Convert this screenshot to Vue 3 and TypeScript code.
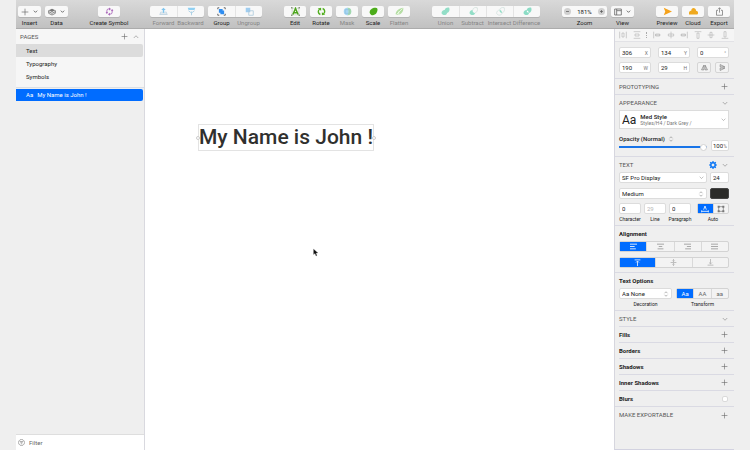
<script setup lang="ts">
import { h, ref } from 'vue'

type Shape = { d: string; fill?: string; stroke?: string; w?: number; o?: number }

const line = (d: string, stroke = '#777', w = 0.8): Shape => ({ d, stroke, w })
const solid = (d: string, fill: string, o = 1): Shape => ({ d, fill, o })

const icons: Record<string, Shape[]> = {
  plus: [line('M6 1V11M1 6H11', '#666', 1)],
  minus: [solid('M0 6a6 6 0 1 0 12 0a6 6 0 1 0-12 0', '#d0d0d0'), line('M3.5 6H8.5', '#555', 1.2)],
  zoomIn: [solid('M0 6a6 6 0 1 0 12 0a6 6 0 1 0-12 0', '#d0d0d0'), line('M3.5 6H8.5M6 3.5V8.5', '#555', 1.2)],
  down: [line('M2 4L6 8L10 4', '#444', 1.8)],
  thinDown: [line('M1.5 4L6 8.5L10.5 4', '#777', 1.1)],
  thinUp: [line('M1.5 8L6 3.5L10.5 8', '#777', 1.1)],
  stepper: [line('M3 4.5L6 1.5L9 4.5M3 7.5L6 10.5L9 7.5', '#777', 1.1)],
  data: [
    solid('M6 1L11 3.5L6 6L1 3.5Z', '#777'),
    line('M1 5.5L6 8L11 5.5M1 8L6 10.5L11 8M1 3.5V8M11 3.5V8', '#777', 1.3),
  ],
  symbol: [
    line('M2.5 8V5a2.5 2.5 0 0 1 2.5-2.5H6M9.5 4V7a2.5 2.5 0 0 1-2.5 2.5H6', '#a45bb5', 1.1),
    solid('M5.5 .5L8 2.5L5.5 4.5ZM6.5 7.5L4 9.5L6.5 11.5ZM.8 7H4.2L2.5 9.2ZM7.8 5H11.2L9.5 2.8Z', '#a45bb5'),
  ],
  forward: [solid('M6 1L9 4H7V8H5V4H3Z', '#7ec4ee'), line('M3 6L1 10H11L9 6M2 8H10', '#b5cddd', 1)],
  backward: [solid('M1 1H11L10 4H2Z', '#8fd0f3'), line('M2 5L6 8L10 5M6 6V11', '#a9cfe4', 1.2)],
  group: [
    solid('M2.5 2.5H7.5V4.5H9.5V9.5H4.5V7.5H2.5Z', '#2e8cf0'),
    line('M1 3V1H3M9 1H11V3M11 9V11H9M3 11H1V9', '#555', 1.1),
  ],
  ungroup: [solid('M1 1H7V7H1Z', '#9fcdf0'), line('M5 5H11V11H5Z', '#a6c5da', 1)],
  edit: [
    line('M1.5 1.5H10.5V10.5H1.5Z', '#a2b596', 0.6),
    line('M2.5 10L6 2L9.5 10M4 7.5H8', '#4ca51b', 2),
    solid('M0 0H2V2H0ZM10 0H12V2H10ZM0 10H2V12H0ZM10 10H12V12H10Z', '#899680'),
  ],
  rotate: [
    line('M4.5 10C1 8.5 1 4.5 3.5 3M7.5 2C11 3.5 11 7.5 8.5 9', '#51ae1e', 1.9),
    solid('M1 2L5.5 1V5ZM11 10L6.5 11V7Z', '#51ae1e'),
  ],
  mask: [
    solid('M1 6a5 5 0 1 0 10 0a5 5 0 1 0-10 0', '#a7d5f4'),
    solid('M6 1a5 5 0 0 1 0 10C8 8 8 4 6 1', '#a8dda6'),
    line('M3 3.5H9V8.5H3Z', '#89bed9', 0.8),
  ],
  scale: [solid('M1 8C0 4 5 0 9 1C12 1 12 5 10 8C8 11 3 13 1 8', '#4cac1a')],
  flatten: [solid('M1 10C0 6 6 1 11 1C12 6 7 12 1 10', '#b5dda4'), line('M2 10L10 2M5 10V6', '#f5fff0', 1)],
  union: [solid('M1 9C0 6 3 4 5 4C5 1 9 0 11 1C12 4 11 7 8 8C8 11 3 12 1 9', '#93dec7')],
  subtract: [solid('M1 9C0 6 3 4 5 4C4 6 6 8 8 8C8 11 3 12 1 9', '#93dec7'), line('M5 4C5 1 9 0 11 1C12 4 11 7 8 8', '#c7dad4', 0.8)],
  intersect: [
    line('M1 9C0 6 3 4 5 4C5 1 9 0 11 1C12 4 11 7 8 8C8 11 3 12 1 9', '#cadbd6', 0.8),
    solid('M5 4C7 4 8 6 8 8C6 8 4 6 5 4', '#93dec7'),
  ],
  difference: [
    solid('M1 9C0 6 3 4 5 4C5 1 9 0 11 1C12 4 11 7 8 8C8 11 3 12 1 9', '#8bdcc5'),
    solid('M5 4.5C7 4.5 7.5 6 7.5 7.5C6 7.5 4.5 6 5 4.5', '#fff'),
  ],
  view: [line('M1 1.5H11V10.5H1ZM4 1.5V10.5M4 4H11', '#666', 1.2)],
  preview: [solid('M1 1L12 6L1 11L3 6Z', '#f5a21b')],
  cloud: [solid('M0 10C-1 6 2 5 3 5C3 0 9 0 9.5 5C12 5 13 9 11 10Z', '#efa91f')],
  share: [line('M4 4.5H2V11H10V4.5H8M6 7.5V1M4 3L6 1L8 3', '#777', 1)],
  distH: [line('M1 1V11M11 1V11M4.5 3H7.5V9H4.5Z', '#aaa')],
  distV: [line('M1 1H11M1 11H11M3 4.5H9V7.5H3Z', '#aaa')],
  alignL: [line('M1 1V11M3 6H11M4 4.5H10V7.5H4Z', '#aaa')],
  alignC: [line('M6 1V11M2 4.5H10V7.5H2Z', '#aaa')],
  alignR: [line('M11 1V11M1 6H9M2 4.5H8V7.5H2Z', '#aaa')],
  alignT: [line('M1 1H11M4.5 3H7.5V11H4.5Z', '#aaa')],
  alignM: [line('M1 6H11M4.5 2H7.5V10H4.5Z', '#aaa')],
  alignB: [line('M1 11H11M4.5 1H7.5V9H4.5Z', '#aaa')],
  flipH: [line('M5 2V10H1ZM7 2V10H11Z', '#666', 1)],
  flipV: [line('M2 1V5L10 5ZM2 7H10L2 11Z', '#666', 1)],
  gear: [
    line('M6 2.6a3.4 3.4 0 1 0 .01 0', '#147bf5', 2.6),
    line('M6 0V2M6 10V12M0 6H2M10 6H12M1.8 1.8L3 3M9 9L10.2 10.2M10.2 1.8L9 3M3 9L1.8 10.2', '#147bf5', 1.8),
  ],
  autoW: [line('M1 8V11M11 8V11M1 9.5H11M4 7L6 1.5L8 7', '#fff', 1.2)],
  fixedW: [
    line('M2.5 2.5H9.5V9.5H2.5Z', '#666', 0.9),
    solid('M1 1H4V4H1ZM8 1H11V4H8ZM1 8H4V11H1ZM8 8H11V11H8Z', '#777'),
  ],
  left: [line('M0 2H12M0 6H8M0 10H10', '#fff', 1.4)],
  center: [line('M0 2H12M3 6H9M1 10H11', '#888', 1.2)],
  right: [line('M0 2H12M5 6H12M2 10H12', '#888', 1.2)],
  justify: [line('M0 2H12M0 6H12M0 10H12', '#888', 1.2)],
  top: [line('M1 1.5H11M6 12V4M3.5 6L6 3.5L8.5 6', '#fff', 1.3)],
  middle: [line('M1 6H11M6 0V4M6 8V12M4 2.5L6 4.5L8 2.5M4 9.5L6 7.5L8 9.5', '#999', 1)],
  bottom: [line('M1 10.5H11M6 0V8M3.5 6L6 8.5L8.5 6', '#999', 1)],
  filter: [line('M6 .8a5.2 5.2 0 1 0 .01 0M3 4.3H9M4 6.3H8M5 8.3H7', '#777', 1)],
}

const Icon = (props: { name: string; size?: number }) =>
  h(
    'svg',
    { viewBox: '0 0 12 12', width: props.size ?? 8, height: props.size ?? 8, 'aria-hidden': 'true' },
    icons[props.name].map((s) =>
      h('path', { d: s.d, fill: s.fill ?? 'none', stroke: s.stroke, 'stroke-width': s.w, opacity: s.o }),
    ),
  )
Icon.props = ['name', 'size']

type Tool = { label: string; icon: string; menu?: boolean; off?: boolean }
type Cluster = { joined?: boolean; tools: Tool[] }

const clusters: Cluster[][] = [
  [{ tools: [{ label: 'Insert', icon: 'plus', menu: true }, { label: 'Data', icon: 'data', menu: true }] }],
  [{ tools: [{ label: 'Create Symbol', icon: 'symbol' }] }],
  [
    { joined: true, tools: [{ label: 'Forward', icon: 'forward', off: true }, { label: 'Backward', icon: 'backward', off: true }] },
    { joined: true, tools: [{ label: 'Group', icon: 'group' }, { label: 'Ungroup', icon: 'ungroup', off: true }] },
  ],
  [
    {
      tools: [
        { label: 'Edit', icon: 'edit' },
        { label: 'Rotate', icon: 'rotate' },
        { label: 'Mask', icon: 'mask', off: true },
        { label: 'Scale', icon: 'scale' },
        { label: 'Flatten', icon: 'flatten', off: true },
      ],
    },
  ],
  [
    {
      joined: true,
      tools: [
        { label: 'Union', icon: 'union', off: true },
        { label: 'Subtract', icon: 'subtract', off: true },
        { label: 'Intersect', icon: 'intersect', off: true },
        { label: 'Difference', icon: 'difference', off: true },
      ],
    },
  ],
  [{ tools: [{ label: 'Zoom', icon: 'zoomIn' }, { label: 'View', icon: 'view', menu: true }] }],
  [
    {
      tools: [
        { label: 'Preview', icon: 'preview' },
        { label: 'Cloud', icon: 'cloud' },
        { label: 'Export', icon: 'share' },
      ],
    },
  ],
]

const pages = ['Text', 'Typography', 'Symbols']
const page = ref('Text')
const zoom = ref(181)
const opacity = ref(100)
const family = ref('SF Pro Display')
const weight = ref('Medium')
const decoration = ref('Aa None')
const geometry = ref([
  [
    { unit: 'X', name: 'X position', value: '306' },
    { unit: 'Y', name: 'Y position', value: '134' },
    { unit: '°', name: 'Rotation', value: '0' },
  ],
  [
    { unit: 'W', name: 'Width', value: '190' },
    { unit: 'H', name: 'Height', value: '29' },
  ],
])
const spacing = ref([
  { label: 'Character', value: '0', hint: '' },
  { label: 'Line', value: '', hint: '29' },
  { label: 'Paragraph', value: '0', hint: '' },
])
const arrange = ['distH', 'distV', 'alignL', 'alignC', 'alignR', 'alignT', 'alignM', 'alignB']
const horizontal = ['left', 'center', 'right', 'justify']
const vertical = ['top', 'middle', 'bottom']
const transforms = ['Aa', 'AA', 'aa']
const styles = ['Fills', 'Borders', 'Shadows', 'Inner Shadows']
</script>

<template>
  <div class="window">
    <header class="toolbar">
      <div v-for="(set, i) in clusters" :key="i" class="set">
        <div v-for="(cluster, j) in set" :key="j" class="cluster" :class="{ joined: cluster.joined }">
          <div v-for="tool in cluster.tools" :key="tool.label" class="tool" :class="{ off: tool.off, menu: tool.menu, long: tool.label === 'Create Symbol' }">
            <div v-if="tool.label === 'Zoom'" class="key zoom">
              <button type="button" aria-label="Zoom out" @click="zoom -= 10"><Icon name="minus" :size="7" /></button>
              <span>{{ zoom }}%</span>
              <button type="button" aria-label="Zoom in" @click="zoom += 10"><Icon name="zoomIn" :size="7" /></button>
            </div>
            <button v-else type="button" class="key" :disabled="tool.off" :aria-label="tool.label">
              <Icon :name="tool.icon" :size="tool.menu ? 8 : 9" /><Icon v-if="tool.menu" name="down" :size="5" />
            </button>
            <span class="caption">{{ tool.label }}</span>
          </div>
        </div>
      </div>
    </header>

    <div class="body">
      <aside class="sidebar">
        <section class="pages">
          <div class="pages-head">
            <h2>PAGES</h2>
            <button type="button" aria-label="Add page"><Icon name="plus" :size="7" /></button>
            <button type="button" aria-label="Collapse pages"><Icon name="thinUp" :size="6" /></button>
          </div>
          <button v-for="p in pages" :key="p" type="button" class="page" :class="{ current: p === page }" @click="page = p">{{ p }}</button>
        </section>
        <div class="layers">
          <button type="button" class="layer"><span>Aa</span><span>My Name is John !</span></button>
        </div>
        <label class="filter"><Icon name="filter" :size="7" /><input type="text" placeholder="Filter" aria-label="Filter layers" /></label>
      </aside>

      <main class="canvas">
        <div class="artwork">My Name is John !<i class="handle start"></i><i class="handle end"></i></div>
        <svg class="pointer" viewBox="0 0 10 16" width="5" height="9" aria-hidden="true">
          <path d="M1 1V12L4 10L6 15L8 14L6 9H10Z" fill="#111" stroke="#999" stroke-width=".6" />
        </svg>
      </main>

      <aside class="inspector">
        <div class="arrange">
          <template v-for="(a, i) in arrange" :key="a">
            <button type="button" :aria-label="a"><Icon :name="a" /></button>
            <span v-if="i === 1" class="divider"></span>
          </template>
        </div>

        <section class="geometry">
          <template v-for="(row, i) in geometry" :key="i">
            <label v-for="f in row" :key="f.unit" class="box">
              <input v-model="f.value" type="text" :aria-label="f.name" /><span>{{ f.unit }}</span>
            </label>
          </template>
          <div class="flips">
            <button type="button" aria-label="Flip horizontally"><Icon name="flipH" :size="7" /></button>
            <button type="button" aria-label="Flip vertically"><Icon name="flipV" :size="7" /></button>
          </div>
        </section>

        <section class="row">
          <h2>PROTOTYPING</h2>
          <button type="button" aria-label="Add prototyping"><Icon name="plus" :size="7" /></button>
        </section>

        <section class="panel appearance">
          <div class="head">
            <h2>APPEARANCE</h2>
            <button type="button" aria-label="Collapse appearance"><Icon name="thinDown" :size="6" /></button>
          </div>
          <button type="button" class="style-card">
            <span class="sample">Aa</span>
            <span class="style-name"><b>Med Style</b><small>Styles/H4 / Dark Grey /</small></span>
            <Icon name="thinDown" :size="5" />
          </button>
          <div class="opacity">
            <div class="opacity-main">
              <label for="opacity">Opacity (Normal) <Icon name="stepper" :size="6" /></label>
              <input id="opacity" v-model.number="opacity" type="range" min="0" max="100" />
            </div>
            <label class="box"><input v-model.number="opacity" type="text" aria-label="Opacity percent" /><span>%</span></label>
          </div>
        </section>

        <section class="panel text">
          <div class="head">
            <h2>TEXT</h2>
            <button type="button" aria-label="Text settings"><Icon name="gear" /></button>
            <button type="button" aria-label="Collapse text"><Icon name="thinDown" :size="6" /></button>
          </div>
          <div class="font-row">
            <label class="box pick"><select v-model="family" aria-label="Font family"><option>SF Pro Display</option><option>SF Pro Text</option></select><Icon name="thinDown" :size="5" /></label>
            <label class="box"><input type="text" value="24" aria-label="Font size" /></label>
          </div>
          <div class="font-row">
            <label class="box pick"><select v-model="weight" aria-label="Font weight"><option>Regular</option><option>Medium</option><option>Bold</option></select><Icon name="stepper" :size="6" /></label>
            <button type="button" class="swatch" aria-label="Text color"></button>
          </div>
          <div class="spacing">
            <label v-for="s in spacing" :key="s.label" class="stack">
              <span class="box"><input v-model="s.value" type="text" :placeholder="s.hint" /></span>
              <span class="note">{{ s.label }}</span>
            </label>
            <div class="stack auto">
              <div class="segments">
                <button type="button" class="on" aria-label="Auto width"><Icon name="autoW" /></button>
                <button type="button" aria-label="Fixed size"><Icon name="fixedW" /></button>
              </div>
              <span class="note">Auto</span>
            </div>
          </div>
        </section>

        <section class="panel">
          <div class="head"><h3>Alignment</h3></div>
          <div class="segments">
            <button v-for="a in horizontal" :key="a" type="button" :class="{ on: a === 'left' }" :aria-label="a"><Icon :name="a" :size="7" /></button>
          </div>
          <div class="segments second">
            <button v-for="a in vertical" :key="a" type="button" :class="{ on: a === 'top' }" :aria-label="a"><Icon :name="a" :size="7" /></button>
          </div>
        </section>

        <section class="panel options">
          <div class="head"><h3>Text Options</h3></div>
          <div class="option-row">
            <label class="stack">
              <span class="box pick"><select v-model="decoration"><option>Aa None</option><option>Underline</option></select><Icon name="stepper" :size="6" /></span>
              <span class="note">Decoration</span>
            </label>
            <div class="stack">
              <div class="segments">
                <button v-for="t in transforms" :key="t" type="button" :class="{ on: t === 'Aa' }">{{ t }}</button>
              </div>
              <span class="note">Transform</span>
            </div>
          </div>
        </section>

        <section class="row inset">
          <h2>STYLE</h2>
          <button type="button" aria-label="Collapse style"><Icon name="thinDown" :size="6" /></button>
        </section>
        <section v-for="s in styles" :key="s" class="row inset">
          <h3>{{ s }}</h3>
          <button type="button" :aria-label="'Add ' + s"><Icon name="plus" :size="7" /></button>
        </section>
        <section class="row">
          <h3><label for="blurs">Blurs</label></h3>
          <input id="blurs" type="checkbox" />
        </section>
        <section class="row last">
          <h2>MAKE EXPORTABLE</h2>
          <button type="button" aria-label="Make exportable"><Icon name="plus" :size="7" /></button>
        </section>
      </aside>
    </div>
  </div>
</template>

<style>
body {
  background: #efefef;
}
</style>

<style scoped>
* {
  box-sizing: border-box;
}
.window {
  display: flex;
  flex-direction: column;
  min-height: 100vh;
  padding: 0 16px;
  font: 6px/8px Roboto, "Liberation Sans", sans-serif;
  color: #222;
}
button,
input,
select {
  margin: 0;
  padding: 0;
  border: 0;
  background: none;
  color: inherit;
  font: inherit;
  min-width: 0;
  outline: 0;
}
button {
  display: flex;
  align-items: center;
  justify-content: center;
}
svg {
  display: block;
  flex: none;
}
h2,
h3 {
  flex: 1;
  margin: 0;
  font-size: 6px;
  line-height: 8px;
}
h2 {
  font-weight: 400;
  color: #555;
}
h3 {
  font-weight: 700;
}

.toolbar {
  display: flex;
  justify-content: space-between;
  height: 29px;
  padding: 6px 4px 0 2px;
  background: linear-gradient(#d9d9d9, #c1c1c1);
  border-bottom: 1px solid #acacac;
}
.set,
.cluster {
  display: flex;
  gap: 4px;
}
.tool {
  display: flex;
  flex-direction: column;
  align-items: center;
  gap: 2px;
  width: 22px;
}
.tool.menu {
  width: 23px;
}
.tool.long {
  width: 38px;
}
.tool:has(.zoom) {
  width: 45px;
}
.key {
  gap: 4px;
  width: 22px;
  height: 11px;
  background: #f8f8f8;
  border-radius: 2px;
  box-shadow: 0 1px 0 #b4b4b4;
}
.menu .key {
  width: 100%;
}
.key.zoom {
  display: flex;
  align-items: center;
  justify-content: space-between;
  width: 100%;
  padding: 0 2px;
}
.caption {
  white-space: nowrap;
}
.off .caption {
  color: #858585;
}
.joined {
  gap: 0;
}
.joined .tool {
  width: 27px;
}
.joined .key {
  width: 100%;
  border-radius: 0;
}
.joined .tool + .tool .key {
  border-left: 1px solid #e4e4e4;
}
.joined .tool:first-child .key {
  border-radius: 2px 0 0 2px;
}
.joined .tool:last-child .key {
  border-radius: 0 2px 2px 0;
}

.body {
  flex: 1;
  display: grid;
  grid-template-columns: 129px 1fr 120px;
}
.sidebar {
  display: flex;
  flex-direction: column;
  border-right: 1px solid #d9d9df;
}
.pages {
  padding-bottom: 4px;
  background: #f6f6f6;
  border-bottom: 1px solid #dbdfe5;
}
.pages-head {
  display: flex;
  align-items: center;
  gap: 5px;
  height: 15px;
  padding: 0 5px 0 4px;
}
.page {
  justify-content: flex-start;
  width: 127px;
  height: 13px;
  padding-left: 10px;
  border-radius: 0 2px 2px 0;
}
.page.current {
  background: #dcdcdc;
}
.layers {
  flex: 1;
  padding: 1px 1px 0 0;
}
.layer {
  justify-content: flex-start;
  gap: 4px;
  width: 100%;
  height: 12px;
  padding-left: 10px;
  border-radius: 0 2px 2px 0;
  background: #006cff;
  color: #fff;
}
.filter {
  display: flex;
  align-items: center;
  gap: 4px;
  height: 16px;
  padding-left: 2px;
  background: #fff;
  border-top: 1px solid #dedede;
}
.filter input::placeholder {
  color: #666;
  opacity: 1;
}

.canvas {
  position: relative;
  background: #fff;
}
.artwork {
  position: absolute;
  left: 53px;
  top: 95px;
  border: 1px solid #e3e3e3;
  font-size: 21px;
  font-weight: 500;
  line-height: 25px;
  white-space: nowrap;
  color: #30302e;
}
.handle {
  position: absolute;
  top: 11px;
  width: 4px;
  height: 4px;
  background: #fff;
  border: 1px solid #ccc;
  border-radius: 50%;
}
.start {
  left: -3px;
}
.end {
  right: -3px;
}
.pointer {
  position: absolute;
  left: 168px;
  top: 219px;
}

.inspector {
  display: flex;
  flex-direction: column;
  border-left: 1px solid #d6d6de;
  border-bottom: 1px solid #d2d2e0;
}
.arrange {
  display: flex;
  align-items: center;
  justify-content: space-between;
  height: 13px;
  padding: 0 5px 0 4px;
  background: #f5f5f5;
  border-bottom: 1px solid #e2e2e6;
}
.divider {
  height: 6px;
  border-left: 1px dotted #aaa;
}
.geometry {
  display: grid;
  grid-template-columns: repeat(3, 1fr);
  gap: 4px 7px;
  padding: 5px 5px 5px 4px;
  border-bottom: 1px solid #dadae3;
}
.box {
  display: flex;
  align-items: center;
  height: 11px;
  padding: 0 2px;
  background: #fff;
  border: 1px solid #dcdcdc;
  border-radius: 2px;
}
.box input,
.box select {
  flex: 1;
  width: 0;
  height: 9px;
}
.box select {
  appearance: none;
}
.box span {
  font-size: 5px;
  color: #777;
}
.box input::placeholder {
  color: #b5b5b5;
  opacity: 1;
}
.flips {
  display: flex;
  justify-content: space-between;
}
.flips button {
  width: 14px;
  height: 11px;
  border: 1px solid #d5d5d5;
  border-radius: 2px;
  background: #f3f3f3;
}
.row,
.head {
  display: flex;
  align-items: center;
}
.row {
  height: 16px;
  padding: 0 6px 0 4px;
  border-bottom: 1px solid #dadae3;
}
.row.inset {
  margin-left: 4px;
  padding-left: 0;
}
.row.last {
  border-bottom: 0;
}
.row input {
  appearance: none;
  width: 6px;
  height: 6px;
  background: #fff;
  border: 1px solid #dadada;
  border-radius: 2px;
}
.head {
  gap: 5px;
  height: 15px;
  padding-right: 1px;
}
.panel {
  padding: 0 5px 4px 4px;
  border-bottom: 1px solid #dadae3;
}
.style-card {
  width: 100%;
  height: 19px;
  gap: 4px;
  padding: 0 2px;
  background: #fff;
  border: 1px solid #dcdcdc;
  text-align: left;
}
.sample {
  font-size: 12px;
  line-height: 16px;
}
.style-name {
  flex: 1;
  display: flex;
  flex-direction: column;
}
.style-name b {
  font-weight: 500;
  line-height: 7px;
}
.style-name small {
  font-size: 5px;
  line-height: 7px;
  color: #777;
}
.appearance {
  padding-bottom: 5px;
}
.opacity {
  display: flex;
  align-items: flex-end;
  gap: 4px;
  padding-top: 6px;
}
.opacity-main {
  flex: 1;
  display: flex;
  flex-direction: column;
}
.opacity-main label {
  display: flex;
  align-items: center;
  gap: 3px;
  font-weight: 500;
}
.opacity-main input {
  appearance: none;
  width: 100%;
  height: 8px;
  background: linear-gradient(#1874e8, #1874e8) center / 100% 2px no-repeat;
}
.opacity-main input::-webkit-slider-thumb {
  appearance: none;
  width: 7px;
  height: 7px;
  background: #fff;
  border: 1px solid #d2d2d2;
  border-radius: 50%;
}
.opacity .box {
  width: 18px;
  padding: 0 1px;
}
.font-row {
  display: flex;
  gap: 3px;
  margin-bottom: 5px;
}
.font-row .pick {
  flex: 1;
}
.font-row > :last-child {
  width: 19px;
}
.font-row + .font-row {
  margin-bottom: 4px;
}
.swatch {
  height: 11px;
  background: #2b2b29;
  border: 1px solid #444;
  border-radius: 2px;
}
.spacing {
  display: flex;
  gap: 3px;
}
.stack {
  display: flex;
  flex-direction: column;
  align-items: center;
  gap: 1px;
  width: 22px;
}
.stack > .box,
.stack > .segments {
  width: 100%;
}
.stack.auto {
  width: 32px;
  margin-left: auto;
}
.note {
  font-size: 5px;
  line-height: 8px;
  white-space: nowrap;
}
.text {
  padding-bottom: 2px;
}
.segments {
  display: flex;
  height: 11px;
  border: 1px solid #d3d3d3;
  border-radius: 2px;
  background: #f3f3f3;
}
.segments button {
  flex: 1;
  color: #666;
}
.segments button + button {
  border-left: 1px solid #d9d9d9;
}
.segments .on {
  background: #006cff;
  color: #fff;
}
.segments.second {
  margin-top: 5px;
}
.options {
  padding-bottom: 2px;
}
.option-row {
  display: flex;
  gap: 4px;
}
.option-row .stack {
  flex: 1;
}
</style>
